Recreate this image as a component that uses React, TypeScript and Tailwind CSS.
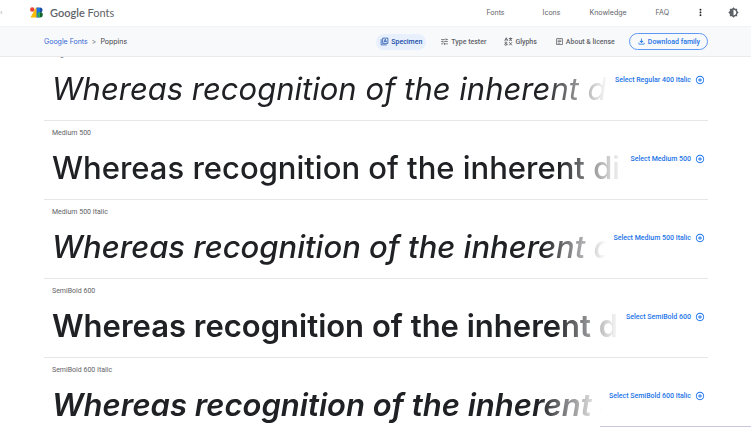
import type { ReactNode } from "react";
import { MdTune, MdOutlineArticle, MdOutlineFileDownload, MdAddCircleOutline, MdBrightness6, MdMoreVert } from "react-icons/md";

const sample = "Whereas recognition of the inherent dignity";

const styles = [
  { name: "Regular 400 Italic", face: "font-normal italic" },
  { name: "Medium 500", face: "font-medium" },
  { name: "Medium 500 Italic", face: "font-medium italic" },
  { name: "SemiBold 600", face: "font-semibold" },
  { name: "SemiBold 600 Italic", face: "font-semibold italic" },
];

function Logo() {
  return (
    <svg viewBox="0 0 28 22" className="h-[11px] w-[14px]" aria-hidden="true">
      <path d="M12 1h5v20H1Z" fill="#fbbc04" />
      <circle cx="4.500" cy="5" r="4.500" fill="#ea4335" />
      <path d="M13 1h7v20h-7Z" fill="#1a73e8" />
      <path d="M20 1a5 5 0 0 1 0 10Z" fill="#174ea6" />
      <path d="M20 10a5.500 5.500 0 0 1 0 11Z" fill="#0d652d" />
      <path d="M20 10a5.500 5.500 0 0 0 0 11Z" fill="#34a853" />
    </svg>
  );
}

function SpecimenIcon() {
  return (
    <svg viewBox="0 0 24 24" className="size-[9px]" fill="none" stroke="currentColor" strokeWidth="2" aria-hidden="true">
      <path d="M7 3h14v14H7ZM3 6v15h15" />
      <path d="m10.500 14 3.500-8 3.500 8M11.500 11.500h5" />
    </svg>
  );
}

function GlyphsIcon() {
  return (
    <svg viewBox="0 0 24 24" className="size-[9px]" fill="none" stroke="currentColor" strokeWidth="2.500" aria-hidden="true">
      <path d="m2 10 4-8 4 8M3.500 7.500h5M13 4h9M17.500 1.500V4M15 4c1 3 3 5 6 6M20 4c-1 3-3 5-6 6" />
      <path d="M9 21 3 15c0-3 4-3 4 0 0 2-5 2-5 5 0 3 5 3 7-2M14 14l7 8M21 14l-7 8" />
    </svg>
  );
}

function Tab({ icon, label, active = false }: { icon: ReactNode; label: string; active?: boolean }) {
  return (
    <button
      type="button"
      className={
        active
          ? "flex h-4 items-center gap-[2px] rounded-full bg-[#e8f0fe] px-1 text-[#174ea6]"
          : "flex h-4 items-center gap-[2px] px-1 text-[#5f6368]"
      }
    >
      {icon}
      {label}
    </button>
  );
}

export default function App() {
  return (
    <div className="flex h-screen flex-col overflow-hidden bg-white font-[Roboto,sans-serif] text-[7px] leading-[10px] font-normal text-[#5f6368]">
      <header className="relative z-10 shrink-0">
        <div className="flex h-[27px] items-center justify-between border-b border-[#f1f3f4] bg-white pr-3 pb-px">
          <div className="flex items-center">
            <span className="w-[30px] text-[8px] text-[#9aa0a6]" aria-hidden="true">‹</span>
            <a href="#home" className="flex items-center gap-[6px] font-[Lato,sans-serif] text-[11px] leading-[14px]">
              <Logo />
              <span><span className="font-semibold">Google</span> Fonts</span>
            </a>
          </div>
          <nav className="flex items-center font-[Inter,sans-serif]">
            <a href="#fonts">Fonts</a>
            <a href="#icons" className="ml-[38px]">Icons</a>
            <a href="#knowledge" className="ml-[29px]">Knowledge</a>
            <a href="#faq" className="ml-[29px]">FAQ</a>
            <button type="button" aria-label="More" className="ml-[26px] text-[#202124]"><MdMoreVert className="size-[11px]" /></button>
            <button type="button" aria-label="Theme" className="ml-[22px]"><MdBrightness6 className="size-[11px]" /></button>
          </nav>
        </div>
        <div className="flex h-[30px] items-center justify-between border-b border-[#e8eaed] bg-[#f8f9fb] pr-[43px] pl-11">
          <nav aria-label="Breadcrumb" className="flex items-center gap-1 font-[Inter,sans-serif] text-[7px]">
            <a href="#home" className="text-[#3367d6]">Google Fonts</a>
            <span>&gt;</span>
            <span className="text-[#3c4043]">Poppins</span>
          </nav>
          <div className="flex items-center gap-[10px] font-medium">
            <Tab icon={<SpecimenIcon />} label="Specimen" active />
            <Tab icon={<MdTune className="size-[9px]" />} label="Type tester" />
            <Tab icon={<GlyphsIcon />} label="Glyphs" />
            <Tab icon={<MdOutlineArticle className="size-[9px]" />} label="About & license" />
            <button type="button" className="flex h-[17px] items-center gap-[2px] rounded-full border border-[#5e97f6] px-[7px] text-[#1a73e8]">
              <MdOutlineFileDownload className="size-[9px]" />
              Download family
            </button>
          </div>
        </div>
      </header>
      <main className="-mt-[15px] pr-[43px] pl-11">
        <ul>
          {styles.map((s) => (
            <li key={s.name} className="h-[79px] border-b border-[#e4e6e8] pt-[7px] pr-[3px] pl-2">
              <p>{s.name}</p>
              <div className="flex items-start gap-[7px]">
                <p className={`min-w-0 flex-1 overflow-hidden pt-[7px] font-[Inter,sans-serif] text-[31px] leading-[46px] whitespace-nowrap text-[#202124] mask-r-from-[calc(100%-64px)] mask-r-to-100% ${s.face}`}>
                  {sample}
                </p>
                <button type="button" className="flex shrink-0 items-center gap-1 pt-4 font-medium text-[#1a73e8]">
                  Select {s.name}
                  <MdAddCircleOutline className="size-[10px]" />
                </button>
              </div>
            </li>
          ))}
        </ul>
      </main>
      <div className="fixed right-0 bottom-0 h-px w-[151px] bg-[#cbc8dc]" />
    </div>
  );
}
